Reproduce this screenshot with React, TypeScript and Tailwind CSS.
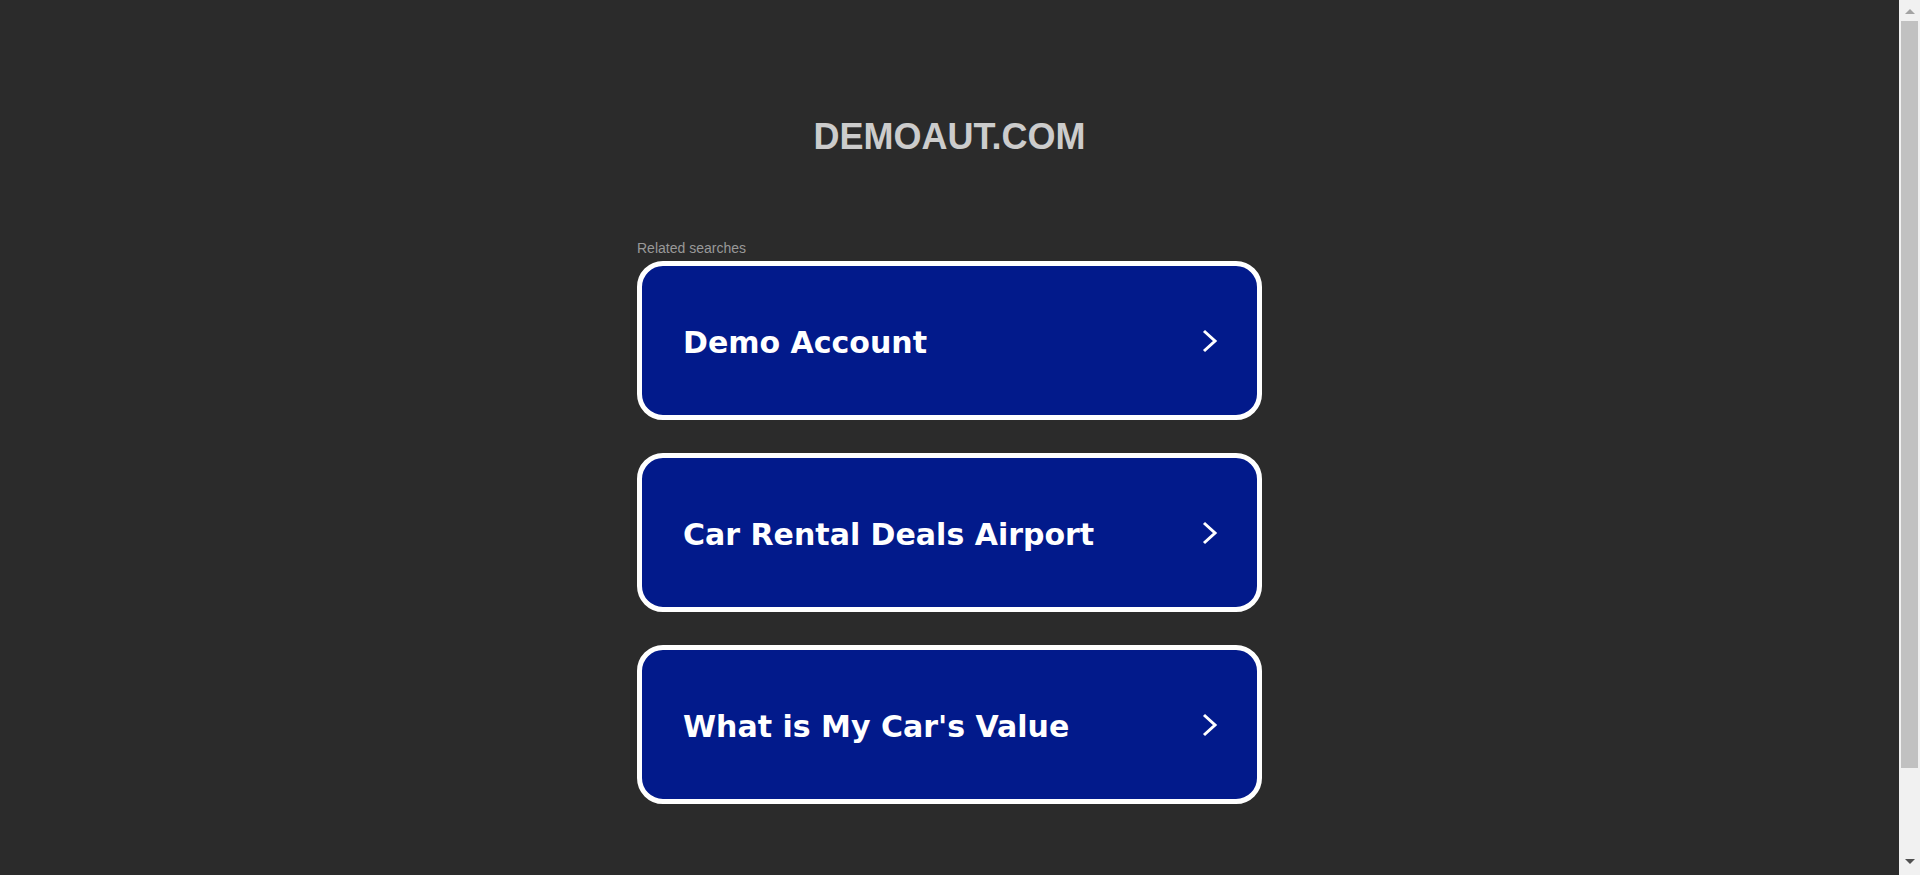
import React from "react";

const links = ["Demo Account", "Car Rental Deals Airport", "What is My Car's Value"];

function Chevron() {
    return (
        <svg width="16" height="24" viewBox="0 0 16 24" fill="none">
            <path d="M2 2 L13 12 L2 22" stroke="white" strokeWidth="3" />
        </svg>
    );
}

// fake classic scrollbar seen on the right of the screenshot
function Scrollbar() {
    return (
        <div className="flex h-full w-[21px] shrink-0 flex-col items-center bg-[#f1f1f1]">
            <svg width="10" height="21" viewBox="0 0 10 21" className="shrink-0">
                <path d="M0 14 L5 9 L10 14 Z" fill="#a3a3a3" />
            </svg>
            <div className="h-[747px] w-[17px] bg-[#c1c1c1]" />
            <div className="flex-1" />
            <svg width="10" height="21" viewBox="0 0 10 21" className="shrink-0">
                <path d="M0 5 L5 10 L10 5 Z" fill="#505050" />
            </svg>
        </div>
    );
}

export default function App() {
    return (
        <div className="flex h-[875px] overflow-hidden bg-[#2b2b2b] font-['Liberation_Sans',Arial,sans-serif]">
            <div className="flex-1">
                <div className="pt-[117px] text-center">
                    <h1 className="text-[36px] leading-[40px] font-bold text-[#cccccc]">DEMOAUT.COM</h1>
                </div>
                <div className="mx-auto mt-[83px] w-[625px]">
                    <div className="mb-[5px] text-[14px] leading-[16px] text-[#999999]">Related searches</div>
                    <div className="flex flex-col gap-[33px]">
                        {links.map((t) => (
                            <a
                                key={t}
                                href="#"
                                className="flex h-[159px] items-center justify-between rounded-[26px] border-[5px] border-white bg-[#021a8b] pl-[41px] pr-[39px]"
                            >
                                <span className="pt-[4px] font-['DejaVu_Sans',Verdana,sans-serif] text-[30px] font-bold text-white">
                                    {t}
                                </span>
                                <Chevron />
                            </a>
                        ))}
                    </div>
                </div>
            </div>
            <Scrollbar />
        </div>
    );
}
